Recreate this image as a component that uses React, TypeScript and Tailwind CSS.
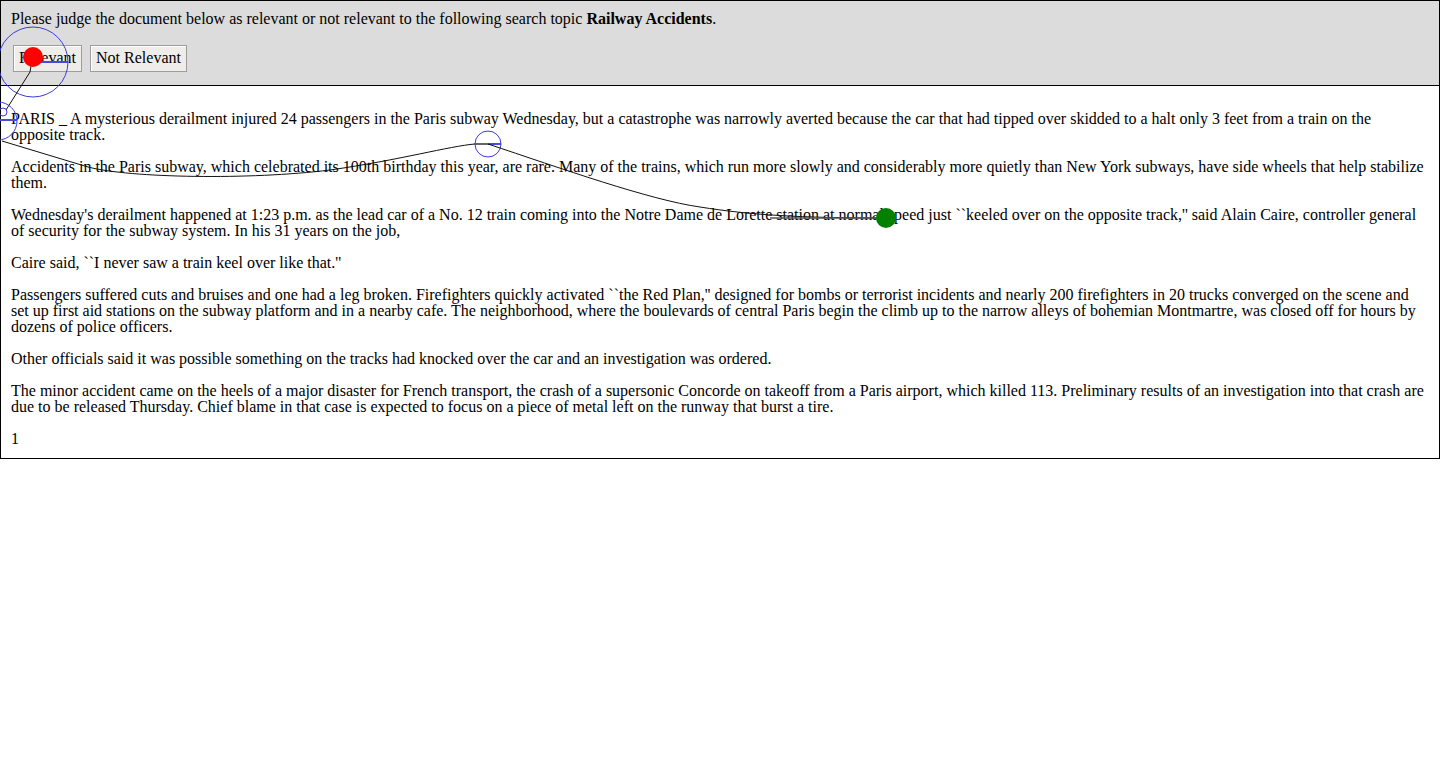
import React from "react";

const paras = [
  "PARIS _ A mysterious derailment injured 24 passengers in the Paris subway Wednesday, but a catastrophe was narrowly averted because the car that had tipped over skidded to a halt only 3 feet from a train on the opposite track.",
  "Accidents in the Paris subway, which celebrated its 100th birthday this year, are rare. Many of the trains, which run more slowly and considerably more quietly than New York subways, have side wheels that help stabilize them.",
  "Wednesday's derailment happened at 1:23 p.m. as the lead car of a No. 12 train coming into the Notre Dame de Lorette station at normal speed just ``keeled over on the opposite track,'' said Alain Caire, controller general of security for the subway system. In his 31 years on the job,",
  "Caire said, ``I never saw a train keel over like that.''",
  "Passengers suffered cuts and bruises and one had a leg broken. Firefighters quickly activated ``the Red Plan,'' designed for bombs or terrorist incidents and nearly 200 firefighters in 20 trucks converged on the scene and set up first aid stations on the subway platform and in a nearby cafe. The neighborhood, where the boulevards of central Paris begin the climb up to the narrow alleys of bohemian Montmartre, was closed off for hours by dozens of police officers.",
  "Other officials said it was possible something on the tracks had knocked over the car and an investigation was ordered.",
  "The minor accident came on the heels of a major disaster for French transport, the crash of a supersonic Concorde on takeoff from a Paris airport, which killed 113. Preliminary results of an investigation into that crash are due to be released Thursday. Chief blame in that case is expected to focus on a piece of metal left on the runway that burst a tire.",
];

export default function App() {
  return (
    <div
      className="relative w-[1440px] h-[779px] bg-white text-black text-[16px] leading-[16px]"
      style={{ fontFamily: '"Liberation Serif", "Times New Roman", serif' }}
    >
      <div className="border border-black">
        <div className="bg-[#dcdcdc] border-b border-black pt-[10px] pb-[13px] px-[10px]">
          <div>
            Please judge the document below as relevant or not relevant to the following search topic{" "}
            <b>Railway Accidents</b>.
          </div>
          <div className="flex gap-[8px] mt-[18px] ml-[2px]">
            <button className="h-[27px] w-[69px] pb-[2px] bg-[#efedea] border border-[#9d9d9d] shadow-[inset_1px_1px_0_#ffffff] text-[16px] leading-[16px]">
              Relevant
            </button>
            <button className="h-[27px] w-[97px] pb-[2px] bg-[#efedea] border border-[#9d9d9d] shadow-[inset_1px_1px_0_#ffffff] text-[16px] leading-[16px]">
              Not Relevant
            </button>
          </div>
        </div>
        <div className="px-[10px] pt-[9px] pb-[11px]">
          {paras.map((p, i) => (
            <p key={i} className="my-[16px]">
              {p}
            </p>
          ))}
          <p className="mt-[16px]">1</p>
        </div>
      </div>

      <svg
        className="absolute left-0 top-0 pointer-events-none"
        width={1440}
        height={779}
        viewBox="0 0 1440 779"
      >
        <circle cx={33} cy={62} r={35} fill="none" stroke="#3b3bdc" strokeWidth={1} />
        <line x1={33} y1={62} x2={68} y2={62} stroke="#4a4ad8" strokeWidth={2} />
        <path d="M31 66 L30 72 L6 110" fill="none" stroke="#111" strokeWidth={1} />
        <circle cx={33} cy={57} r={10} fill="#ff0000" />

        <circle cx={3} cy={112} r={4} fill="none" stroke="#3b3bdc" strokeWidth={1} />
        <circle cx={-2} cy={121} r={19} fill="none" stroke="#3b3bdc" strokeWidth={1} />
        <line x1={0} y1={120} x2={17} y2={120} stroke="#4a4ad8" strokeWidth={2} />

        <path
          d="M2 141 L88 167 C130 178, 250 180, 330 170 C400 160, 450 146, 475 144 L488 144"
          fill="none"
          stroke="#111"
          strokeWidth={1}
        />
        <line x1={474} y1={144} x2={488} y2={144} stroke="#666" strokeWidth={2} />
        <circle cx={488} cy={144} r={13} fill="none" stroke="#3b3bdc" strokeWidth={1} />
        <line x1={488} y1={144} x2={501} y2={144} stroke="#4a4ad8" strokeWidth={2} />

        <path
          d="M488 144 C560 168, 650 200, 700 207 C750 215, 800 218, 886 218"
          fill="none"
          stroke="#111"
          strokeWidth={1}
        />
        <line x1={770} y1={218} x2={880} y2={218} stroke="#555" strokeWidth={1.5} />
        <circle cx={886} cy={218} r={10} fill="#008000" />
      </svg>
    </div>
  );
}
